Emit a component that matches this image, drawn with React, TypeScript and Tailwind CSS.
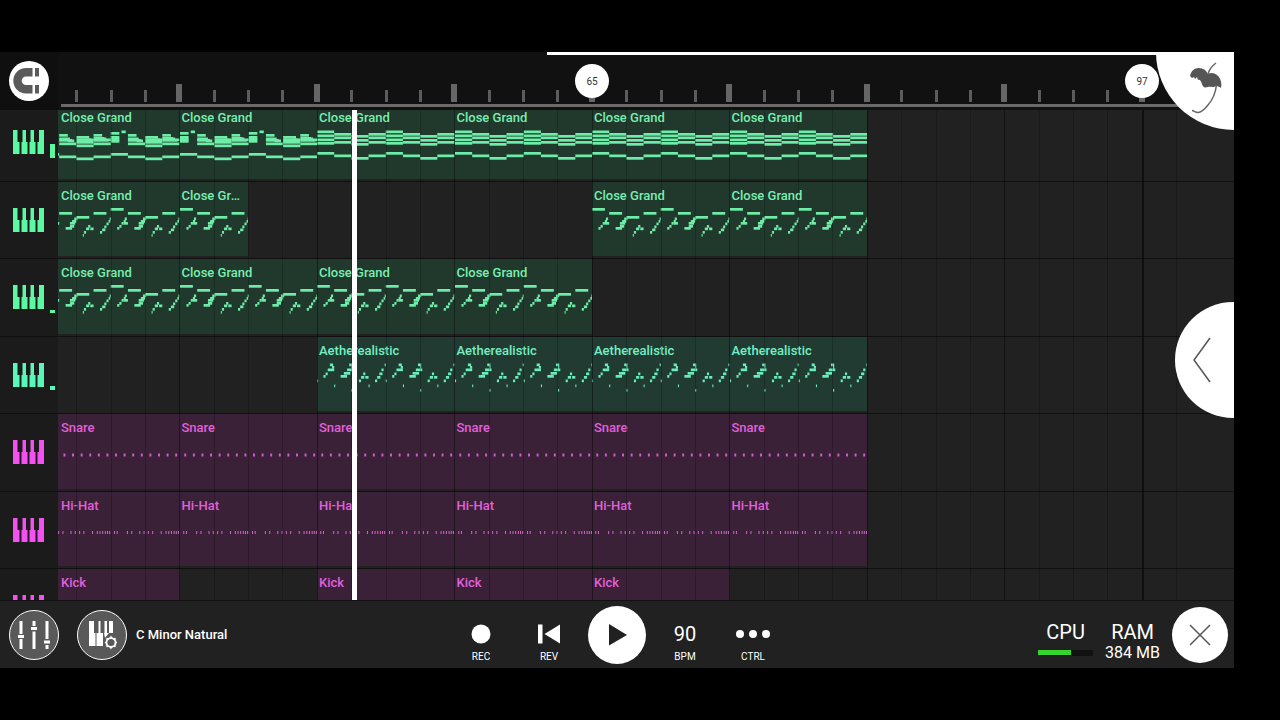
import React, { useState } from 'react';

// [start step, length in steps, y]
type Note = [number, number, number];

interface Clip {
  name?: string;
  cells: number;
  notes?: Note[];
  offset?: number;
}

interface Track {
  id: string;
  tone: 'green' | 'teal' | 'pink';
  meter: number;
  clips: Clip[];
}

// One cell is two bars, one pattern is two cells of 32 steps
const CELL = 34.375;
const PATTERN = CELL * 2;
const STEP = PATTERN / 64;
// The timeline is scrolled, so the first block is cut on its left side
const CUT = 16;
const FIRST = 4 - CUT / CELL;

const tones = {
  green: { clip: 'bg-[#20392c]', text: 'text-[#78eeb0]', note: '#6eeda8', key: '#5bf9a2' },
  teal: { clip: 'bg-[#213a32]', text: 'text-[#74efc2]', note: '#69edbb', key: '#58f8bb' },
  pink: { clip: 'bg-[#3a2138]', text: 'text-[#e360db]', note: '#cf5dcb', key: '#f550f2' },
};

const brokenChords: Note[] = [
  [0, 8, 6], [0, 8, 10], [0, 8, 12], [0, 8, 14], [10, 4, 4.5], [0, 16, 27],
  [16, 8, 8], [16, 10, 11.5], [16, 12, 13], [24, 6, 13.5], [16, 16, 16.5], [16, 16, 29.5],
  [32, 12, 10], [32, 14, 12.5], [42, 6, 12.5], [32, 16, 15], [32, 16, 18.5], [32, 16, 31.5],
  [48, 8, 8], [48, 10, 11], [56, 4, 11.5], [60, 4, 12.5], [48, 14, 13], [48, 16, 16.5], [48, 16, 29.5],
];

const chords: Note[] = [
  [0, 16, 4.5], [0, 16, 8.5], [0, 16, 12.5], [0, 16, 16], [0, 16, 26],
  [16, 16, 7], [16, 16, 10.5], [16, 16, 15], [16, 16, 28.5],
  [32, 16, 9], [32, 16, 13], [32, 16, 17], [32, 16, 31],
  [48, 16, 7], [48, 16, 10.5], [48, 16, 15], [48, 16, 28.5],
];

const melody: Note[] = [
  [0, 12, 4], [16, 12, 8], [32, 12, 12], [48, 12, 8],
  [6, 2, 23], [8, 2, 21], [10, 2, 18], [12, 2, 16], [12, 4, 18], [13, 2, 13.5],
  [22, 6, 23], [26, 4, 21], [26, 5, 18], [28, 4, 16], [30, 3, 13.5],
  [38, 1, 30], [39, 2, 27], [41, 3, 23.5], [43, 2, 21], [45, 3, 23.5],
  [54, 2, 27], [56, 3, 24.5], [58, 2, 21.5], [60, 2, 18.5], [62, 1.5, 16], [63, 1, 13.5],
];

const aether: Note[] = [
  [0, 1, 20.5], [16, 1, 25.5], [32, 1, 30], [48, 1, 25.5],
  [6, 2, 16], [8, 2, 13.5], [10, 6, 9.5], [12, 3, 4.5], [14, 2, 7],
  [22, 6, 16], [25, 6, 13], [28, 6, 9.5], [30, 3, 4.5], [32, 1, 7],
  [39, 2, 20.5], [41, 3, 17], [43, 2, 13.5], [45, 3, 17],
  [54, 2, 20.5], [56, 3, 17], [58, 3, 13.5], [60, 2, 9.5], [63, 1, 4.5],
];

const snare: Note[] = [4, 12, 20, 28, 36, 44, 52, 60].map((s) => [s, 1.8, 17.5] as Note);
const hat: Note[] = [3, 5.5, 15, 19, 26.5, 30.5, 34.5, 38.5, 46.5, 51, 53.5, 56, 58.5, 60.5, 62.5].map(
  (s) => [s, 1, 17] as Note
);

const fill = (name: string, notes: Note[], from = 0, to = 6): Clip[] =>
  Array.from({ length: to - from }, (_, i) =>
    from + i === 0 ? { name, notes, cells: FIRST, offset: CUT } : { name, notes, cells: 4 }
  );

const tracks: Track[] = [
  {
    id: 'grand-1',
    tone: 'green',
    meter: 14,
    clips: [...fill('Close Grand', brokenChords, 0, 2), ...fill('Close Grand', chords, 2, 6)],
  },
  {
    id: 'grand-2',
    tone: 'green',
    meter: 0,
    clips: [
      ...fill('Close Grand', melody, 0, 1),
      { name: 'Close Grand', notes: melody, cells: 2 },
      { cells: 10 },
      ...fill('Close Grand', melody, 4, 6),
    ],
  },
  { id: 'grand-3', tone: 'green', meter: 3, clips: fill('Close Grand', melody, 0, 4) },
  {
    id: 'aether',
    tone: 'teal',
    meter: 4,
    clips: [{ cells: FIRST + 4 }, ...fill('Aetherealistic', aether, 2, 6)],
  },
  { id: 'snare', tone: 'pink', meter: 0, clips: fill('Snare', snare) },
  { id: 'hat', tone: 'pink', meter: 0, clips: fill('Hi-Hat', hat) },
  {
    id: 'kick',
    tone: 'pink',
    meter: 0,
    clips: [...fill('Kick', [], 0, 1), { cells: 4 }, ...fill('Kick', [], 2, 5)],
  },
];

const cells = Array.from({ length: 34 }, (_, i) => i);

function Keys({ color }: { color: string }) {
  return (
    <svg width="31" height="24" viewBox="0 0 31 24" fill={color}>
      <path d="M0 0h4.500v12H6.500v12H0zM9.500 0h3.500v12h1.500v12h-6V12h1zM17.500 0H21v12h1.500v12h-6V12h1zM26 0h5v24h-6.500V12H26z" />
    </svg>
  );
}

function ClipBlock({ clip, tone }: { clip: Clip; tone: Track['tone'] }) {
  const t = tones[tone];
  const width = clip.cells * CELL;
  if (!clip.name) return <div className="shrink-0" style={{ width }} />;
  const repeats = Math.ceil((width + (clip.offset || 0)) / PATTERN);
  return (
    <div className={`flex shrink-0 flex-col overflow-hidden ${t.clip}`} style={{ width }}>
      <span
        className={`h-[22px] truncate pt-[6px] pr-1 text-[13px] leading-4 font-medium ${t.text} ${
          clip.offset ? 'pl-[3px]' : 'pl-[2px]'
        }`}
      >
        {clip.name}
      </span>
      <svg className="w-full flex-1" fill={t.note}>
        {Array.from({ length: repeats }, (_, r) =>
          clip.notes?.map(([start, length, y], i) => (
            <rect
              key={`${r}-${i}`}
              x={r * PATTERN + start * STEP - (clip.offset || 0)}
              y={y}
              width={length * STEP}
              height={tone === 'pink' ? 3 : 2.7}
            />
          ))
        )}
      </svg>
    </div>
  );
}

function TrackRow({ track }: { track: Track }) {
  return (
    <div className="flex shrink-0 border-t border-[#101010] odd:h-[78px] even:h-[77px]">
      <button
        type="button"
        aria-label={track.id}
        className="relative flex w-[58px] shrink-0 items-start bg-[#1b1b1b] pt-[26px] pl-[13px]"
      >
        <Keys color={tones[track.tone].key} />
        {track.meter > 0 && (
          <span
            className="absolute right-[3px] bottom-[23px] w-[5px]"
            style={{ height: track.meter, backgroundColor: tones[track.tone].key }}
          />
        )}
      </button>
      <div className="flex min-w-0 flex-1 overflow-hidden pb-[2px]">
        {track.clips.map((clip, i) => (
          <ClipBlock key={i} clip={clip} tone={track.tone} />
        ))}
      </div>
    </div>
  );
}

function Ruler() {
  return (
    <div className="relative flex h-[58px] shrink-0 bg-[#111111]">
      <div className="flex w-[58px] shrink-0 items-center justify-center bg-[#0f0f0f]">
        <button
          type="button"
          aria-label="Snap"
          className="flex h-10 w-10 items-center justify-center rounded-full bg-white"
        >
          <svg width="32" height="28" viewBox="0 0 32 28" fill="#5b5b5b">
            <path d="M19.500 1H13a12.700 12.700 0 0 0 0 25.400h6.500v-8.400H13a4.300 4.300 0 0 1 0-8.600h6.500zM22 1h4v8.400h-4zM22 18h4v8.400h-4z" />
          </svg>
        </button>
      </div>
      <div className="min-w-0 flex-1 overflow-hidden pl-[3px]">
        <div className="-ml-[3px] flex h-[50px] items-end">
          <div className="shrink-0" style={{ width: CELL * 0.5 }} />
          {cells.slice(1).map((i) => (
            <div key={i} className="flex shrink-0 items-end" style={{ width: CELL }}>
              <div
                className={
                  i % 4 === 0 ? '-ml-[2px] h-[18px] w-[6px] bg-[#666666]' : 'h-3 w-[3px] bg-[#5c5c5c]'
                }
              />
            </div>
          ))}
        </div>
        <div className="mt-[2px] h-[3px] bg-[#6a6a6a]" />
      </div>
      <div className="absolute top-0 right-0 left-[547px] h-[3px] bg-white" />
      <span className="absolute top-3 left-[575px] flex h-[34px] w-[34px] items-center justify-center rounded-full bg-white text-[10px] text-[#333333]">
        65
      </span>
      <span className="absolute top-3 left-[1125px] flex h-[34px] w-[34px] items-center justify-center rounded-full bg-white text-[10px] text-[#333333]">
        97
      </span>
    </div>
  );
}

function GridLines() {
  return (
    <div className="pointer-events-none absolute inset-y-0 right-0 left-[58px] flex overflow-hidden">
      <div className="shrink-0" style={{ width: CELL * 0.5 + 1 }} />
      {cells.slice(1).map((i) => (
        <div
          key={i}
          className={`shrink-0 ${
            i === 32
              ? 'border-l-2 border-black/50'
              : i % 4 === 0
                ? 'border-l border-black/40'
                : 'border-l border-black/20'
          }`}
          style={{ width: CELL }}
        />
      ))}
    </div>
  );
}

function Transport() {
  const [playing, setPlaying] = useState<boolean>(false);
  const item = 'flex w-[68px] flex-col items-center text-[10px] leading-3 text-white';

  return (
    <div className="grid h-[68px] shrink-0 grid-cols-[1fr_auto_1fr] items-center border-t border-[#111111] bg-[#212121] text-white">
      <div className="flex items-center pl-[9px]">
        <button
          type="button"
          aria-label="Mixer"
          className="flex h-[50px] w-[50px] items-center justify-center rounded-full border border-white bg-[#595959]"
        >
          <svg width="32" height="30" viewBox="0 0 32 30" fill="#fff">
            <path d="M1.500 1h3v13h-3zM0 15h6v3H0zM1.500 19h3v10h-3zM14.500 1h3v5h-3zM13 7h6v3h-6zM14.500 11.500h3V29h-3zM27.500 1h3v18h-3zM26 20.500h6v3h-6zM27.500 25h3v4h-3z" />
          </svg>
        </button>
        <button type="button" className="ml-[18px] flex items-center text-[13px] font-medium">
          <span className="flex h-[50px] w-[50px] items-center justify-center rounded-full border border-white bg-[#595959]">
            <svg width="30" height="30" viewBox="0 0 30 30" fill="#fff">
              <path d="M2 1h5v12h1.500v13H2zM11.500 1h2v12H16v13H9.500V13h2zM17.500 1H20v12h2l-4 5-1-5h.5zM22 1h4v12h-4z" />
              <path
                stroke="#595959"
                strokeWidth="1"
                d="M24 15.200l2 2.300 3-.3.300 3 1.200 2.300-1.200 2.300-.3 3-3-.3-2 2.300-2-2.300-3 .3-.3-3-1.200-2.300 1.200-2.300.3-3 3 .3z"
              />
              <circle cx="24" cy="22.500" r="3.600" fill="#595959" />
            </svg>
          </span>
          <span className="ml-[9px]">C Minor Natural</span>
        </button>
      </div>

      <div className="flex items-center">
        <button type="button" className={item}>
          <svg width="24" height="24" viewBox="0 0 24 24" fill="#fff" className="mt-4 mb-[5px]">
            <circle cx="12" cy="12" r="9.500" />
          </svg>
          REC
        </button>
        <button type="button" className={item}>
          <svg width="24" height="24" viewBox="0 0 24 24" fill="#fff" className="mt-4 mb-[5px]">
            <path d="M1 2.500h4.500v19H1zM23 2.500v19L7.500 12z" />
          </svg>
          REV
        </button>
        <div className="flex w-[68px] justify-center">
          <button
            type="button"
            aria-label={playing ? 'Pause' : 'Play'}
            onClick={() => setPlaying(!playing)}
            className="flex h-[58px] w-[58px] items-center justify-center rounded-full bg-white"
          >
            <svg width="20" height="22" viewBox="0 0 20 22" fill="#212121">
              {playing ? <path d="M3 2h5v18H3zM12 2h5v18h-5z" /> : <path d="M2 0v21.500L20 11z" />}
            </svg>
          </button>
        </div>
        <button type="button" className={item}>
          <span className="mt-4 mb-[5px] text-[20px] leading-6">90</span>
          BPM
        </button>
        <button type="button" className={item}>
          <svg width="34" height="24" viewBox="0 0 34 24" fill="#fff" className="mt-4 mb-[5px]">
            <circle cx="4" cy="12" r="4" />
            <circle cx="17" cy="12" r="4" />
            <circle cx="30" cy="12" r="4" />
          </svg>
          CTRL
        </button>
      </div>

      <div className="flex items-center justify-end pr-[6px]">
        <div className="flex w-[55px] flex-col items-center pt-3">
          <span className="text-[20px] leading-6">CPU</span>
          <div className="mt-[6px] mb-[6px] h-[6px] w-full bg-[#111111]">
            <div className="h-[5px] bg-[#35d52f]" style={{ width: '60%' }} />
          </div>
        </div>
        <div className="ml-3 flex flex-col items-center pt-3">
          <span className="text-[20px] leading-6">RAM</span>
          <span className="text-[16px] leading-[18px]">384 MB</span>
        </div>
        <button
          type="button"
          aria-label="Close"
          className="ml-3 flex h-14 w-14 items-center justify-center rounded-full bg-white"
        >
          <svg width="22" height="22" viewBox="0 0 22 22" stroke="#555" strokeWidth="1.500">
            <path d="M1 1l20 20M21 1L1 21" />
          </svg>
        </button>
      </div>
    </div>
  );
}

export default function App() {
  return (
    <div className="h-screen bg-black py-[52px] pr-[46px] font-[Roboto,sans-serif]">
      <div className="relative flex h-full flex-col overflow-hidden bg-[#212121]">
        <Ruler />
        <div className="relative min-h-0 flex-1 overflow-hidden">
          <div className="-mt-[7px] flex flex-col">
            {tracks.map((track) => (
              <TrackRow key={track.id} track={track} />
            ))}
          </div>
          <GridLines />
          <div className="absolute inset-y-0 left-[352px] w-[5px] bg-white" />
        </div>
        <Transport />

        <button
          type="button"
          aria-label="Menu"
          className="absolute top-0 right-0 h-[78px] w-[78px] rounded-bl-full bg-white"
        >
          <svg width="78" height="78" viewBox="0 0 78 78" fill="none">
            <path
              fill="#555"
              d="M34 24c1-5 4-8 9-8 4 0 7 2 9 6 3-2 8-1 11 3 2 3 3 7 2 11-1-1-3-2-5-2-3 2-5 0-8 1-4 1-5 0-6-3-1-3-2-5-4-4l-1-3-2 2-1-2-2 1z"
            />
            <path stroke="#666" strokeWidth="1.500" d="M52 22c1-4 4-8 8-11M60.500 33c-1 8-4 15-8.500 20-4 5-7 7.500-10 7.500-3 0-4-2-6-2" />
          </svg>
        </button>
        <button
          type="button"
          aria-label="Open panel"
          className="absolute top-[250px] right-0 flex h-[116px] w-[59px] items-center rounded-l-full bg-white pl-[18px]"
        >
          <svg width="18" height="46" viewBox="0 0 18 46" fill="none" stroke="#555" strokeWidth="1.500">
            <path d="M17 1L1 23l16 22" />
          </svg>
        </button>
      </div>
    </div>
  );
}
